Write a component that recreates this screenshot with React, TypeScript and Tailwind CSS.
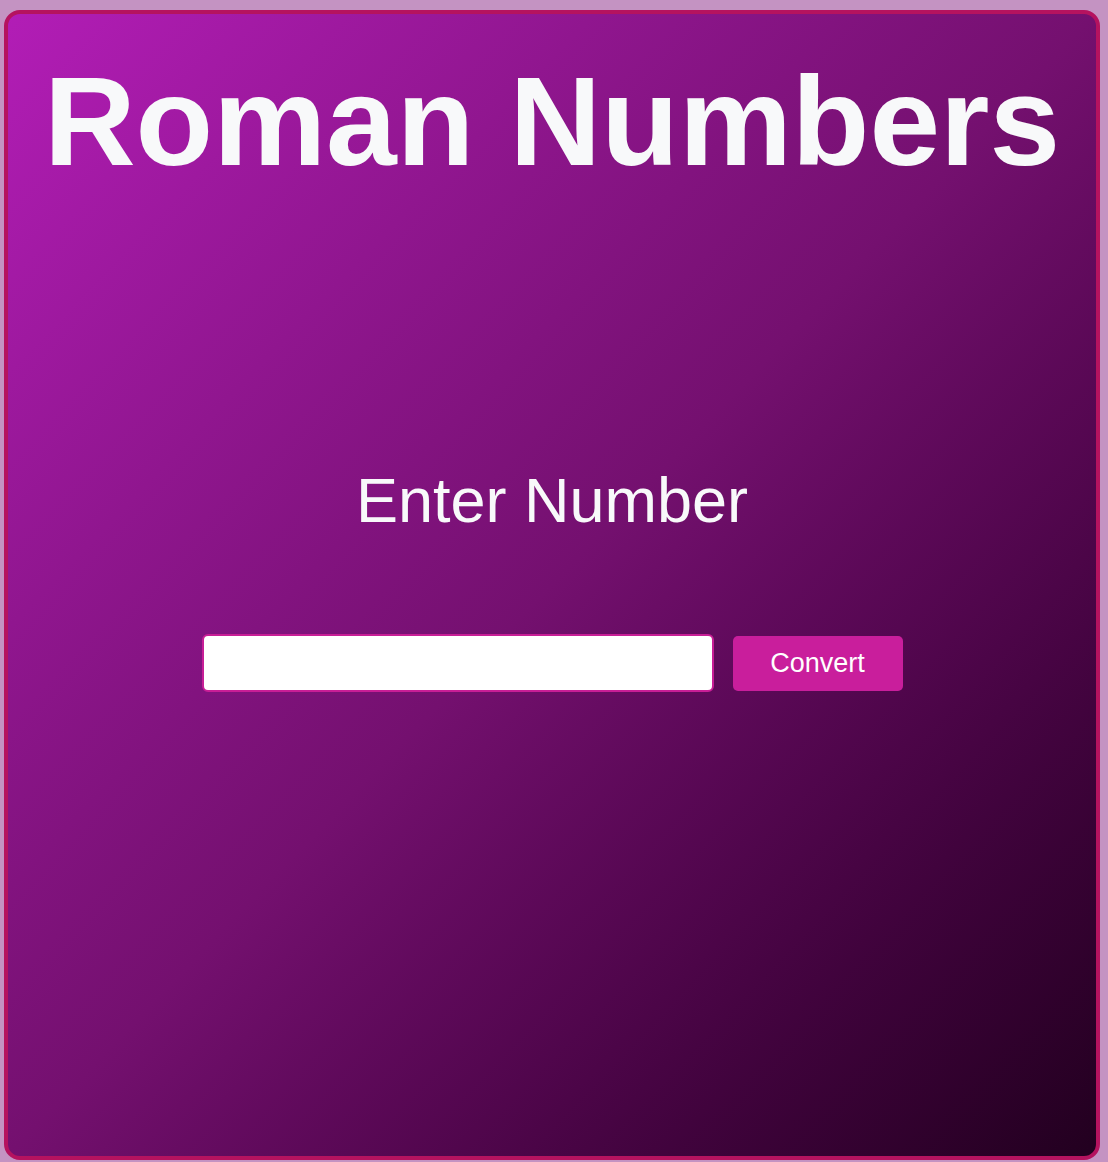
export default function App() {
  return (
    <div className="h-[1162px] w-full overflow-hidden bg-[#c493c2] px-[4px] pt-[10px] pb-[2px] font-['Liberation_Sans',Arial,sans-serif]">
      <div className="flex h-[1150px] w-[1096px] flex-col items-center rounded-[16px] border-4 border-[#b5135f] bg-gradient-to-br from-[#b21db6] via-[#74106f] to-[#22001f] pt-[44px]">
        <h1 className="text-[127px] font-bold leading-none text-[#f8f9fa]">Roman Numbers</h1>
        <p className="mt-[284px] text-[63px] leading-none text-[#f8f9fa]">Enter Number</p>
        <div className="mt-[102px] flex items-center gap-[19px]">
          <input
            type="text"
            className="h-[58px] w-[512px] rounded-[6px] border-2 border-[#c81e96] bg-white px-3 text-2xl outline-none"
          />
          <button className="h-[55px] w-[170px] rounded-[5px] bg-[#c91e9c] text-[27px] text-white">
            Convert
          </button>
        </div>
      </div>
    </div>
  );
}
